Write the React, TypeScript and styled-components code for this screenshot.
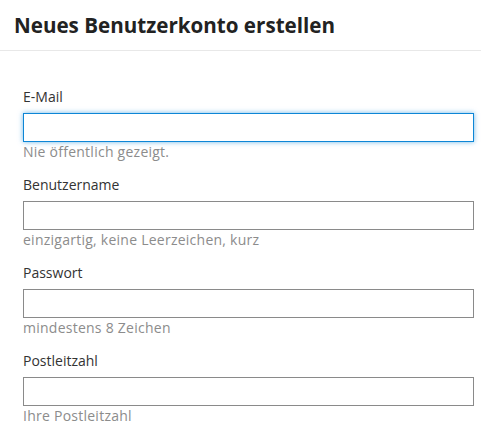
import styled, { createGlobalStyle } from "styled-components";

const GlobalStyle = createGlobalStyle`
  * { box-sizing: border-box; }
  body {
    margin: 0;
    background: #ffffff;
    font-family: "Open Sans", "Noto Sans", sans-serif;
    color: #333333;
  }
`;

const Header = styled.header`
  height: 51px;
  padding: 0 14px;
  display: flex;
  align-items: center;
  border-bottom: 1px solid #e8e8e8;
`;

const Title = styled.h1`
  margin: 0;
  font-size: 20.6px;
  font-weight: 700;
  color: #222222;
`;

const Form = styled.form`
  display: flex;
  flex-direction: column;
  gap: 13px;
  padding: 36px 7px 0 23px;
`;

const Field = styled.div`
  display: flex;
  flex-direction: column;
`;

const Label = styled.label`
  font-size: 14px;
  line-height: 20px;
  color: #333333;
  margin-bottom: 6px;
`;

const Input = styled.input<{ $focused?: boolean }>`
  height: 29px;
  width: 100%;
  margin: 0;
  padding: 0 6px;
  font: inherit;
  border: 1px solid ${(p) => (p.$focused ? "#0d86d6" : "#8a8a8a")};
  border-radius: 0;
  outline: none;
  box-shadow: ${(p) => (p.$focused ? "0 0 5px rgba(13, 134, 214, 0.6)" : "none")};
`;

const Help = styled.span`
  font-size: 14px;
  line-height: 20px;
  letter-spacing: 0.25px;
  color: #8c8c8c;
`;

const fields = [
  { label: "E-Mail", help: "Nie öffentlich gezeigt.", type: "email", focused: true },
  { label: "Benutzername", help: "einzigartig, keine Leerzeichen, kurz", type: "text" },
  { label: "Passwort", help: "mindestens 8 Zeichen", type: "password" },
  { label: "Postleitzahl", help: "Ihre Postleitzahl", type: "text" },
];

const App = () => {
  return (
    <>
      <GlobalStyle />
      <Header>
        <Title>Neues Benutzerkonto erstellen</Title>
      </Header>
      <Form>
        {fields.map((f) => (
          <Field key={f.label}>
            <Label>{f.label}</Label>
            <Input type={f.type} $focused={f.focused} />
            <Help>{f.help}</Help>
          </Field>
        ))}
      </Form>
    </>
  );
};

export default App;
